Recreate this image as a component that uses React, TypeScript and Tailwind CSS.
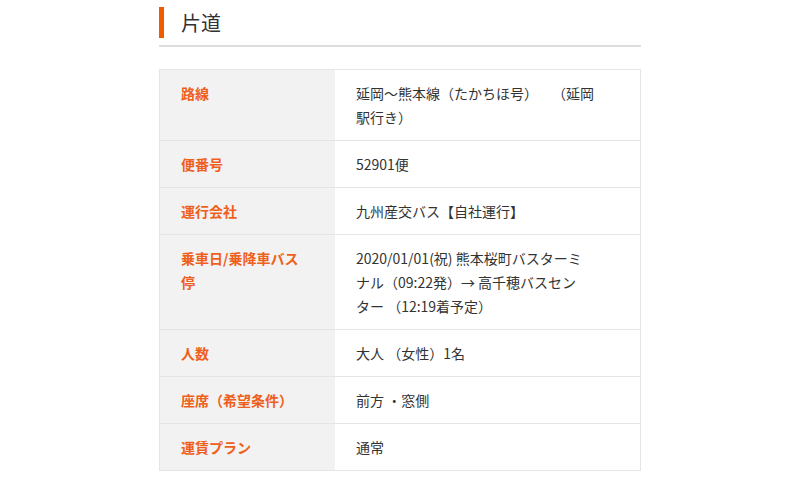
const rows: { label: string[]; value: string[] }[] = [
  { label: ['路線'], value: ['延岡～熊本線（たかちほ号）　（延岡', '駅行き）'] },
  { label: ['便番号'], value: ['52901便'] },
  { label: ['運行会社'], value: ['九州産交バス【自社運行】'] },
  {
    label: ['乗車日/乗降車バス', '停'],
    value: ['2020/01/01(祝) 熊本桜町バスターミ', 'ナル（09:22発）→ 高千穂バスセン', 'ター （12:19着予定）'],
  },
  { label: ['人数'], value: ['大人 （女性）1名'] },
  { label: ['座席（希望条件）'], value: ['前方 ・窓側'] },
  { label: ['運賃プラン'], value: ['通常'] },
];

function Lines({ lines }: { lines: string[] }) {
  return (
    <>
      {lines.map((l) => (
        <span key={l} className="block whitespace-pre">
          {l}
        </span>
      ))}
    </>
  );
}

export default function App() {
  return (
    <main className="min-h-screen bg-white font-['Noto_Sans_CJK_JP','Noto_Sans',sans-serif] text-[#333333] [text-spacing-trim:space-all]">
      <section className="mx-auto w-[482px] pt-[7px]">
        <div className="flex items-center border-b-2 border-[#dddddd] pb-[7px]">
          <span className="h-[31px] w-[5px] bg-[#f05a00]" />
          <h2 className="ml-[17px] text-[20px] leading-[31px]">片道</h2>
        </div>

        <div className="mt-[22px] border border-[#e5e5e5]">
          {rows.map((row, i) => (
            <div
              key={row.label[0]}
              className={`grid grid-cols-[175px_1fr] text-[14px] leading-[24px] ${
                i > 0 ? 'border-t border-[#e5e5e5]' : ''
              }`}
            >
              <div className="bg-[#f2f2f2] py-[11px] pl-[21px] pr-[16px] font-bold text-[#ef5f1c]">
                <Lines lines={row.label} />
              </div>
              <div className="py-[11px] pl-[21px] pr-[16px]">
                <Lines lines={row.value} />
              </div>
            </div>
          ))}
        </div>
      </section>
    </main>
  );
}
